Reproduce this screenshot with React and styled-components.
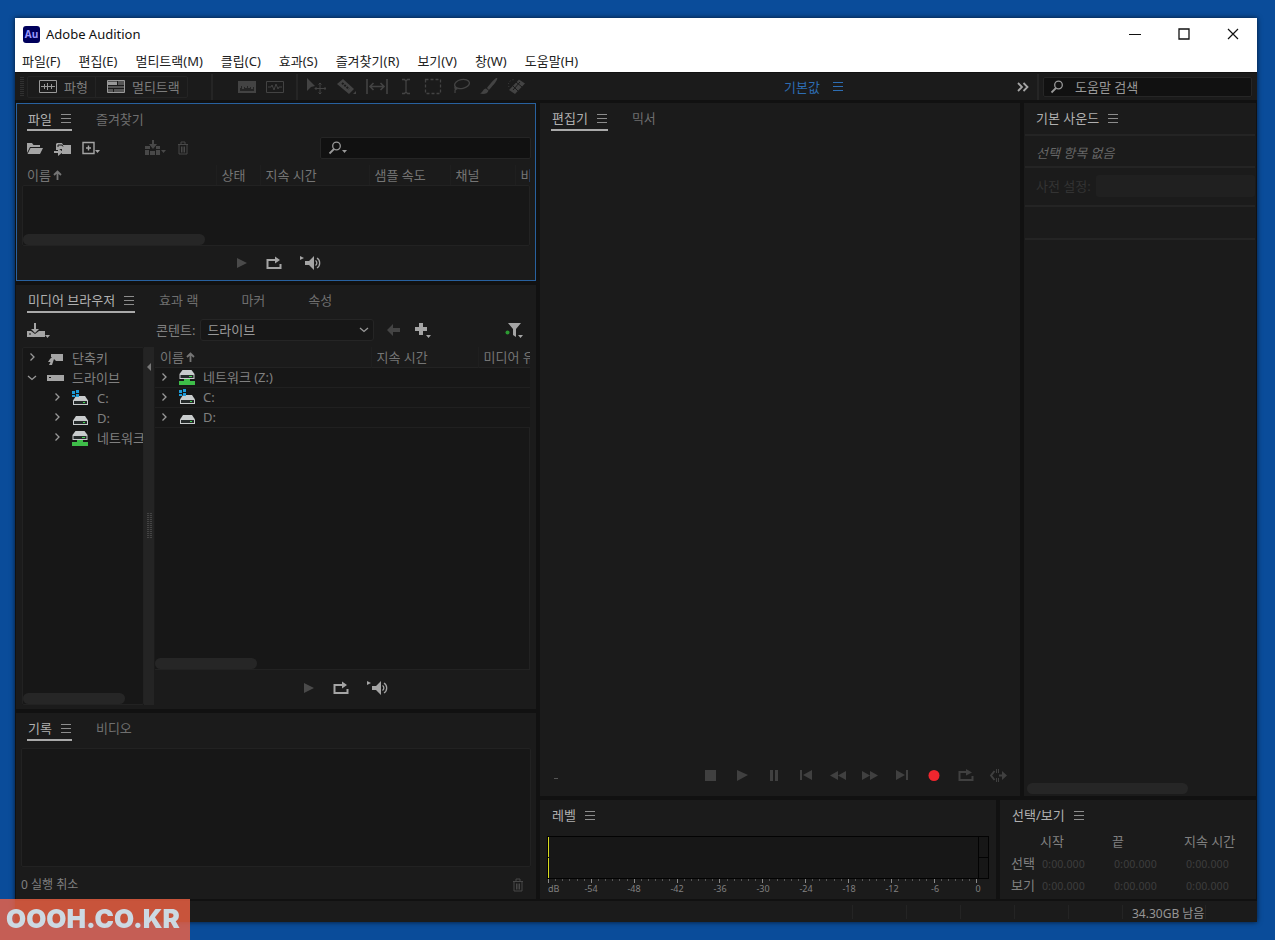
import React from 'react'
import styled, { createGlobalStyle, css } from 'styled-components'

const GlobalStyle = createGlobalStyle`
  * { box-sizing: border-box; }
  body {
    margin: 0;
    background: #0a4c9a;
    font-family: "Noto Sans", "Noto Sans CJK KR", sans-serif;
    font-size: 13px;
    line-height: 20px;
    color: #808080;
  }
  button, input, select {
    font: inherit;
    color: inherit;
    border: 0;
    padding: 0;
    margin: 0;
    background: none;
  }
  svg { display: block; flex: none; }
`

const Desktop = styled.div`
  min-height: 100vh;
  display: flex;
  padding: 18px 18px 18px 15px;
`

const Window = styled.div`
  flex: 1;
  min-width: 0;
  display: flex;
  flex-direction: column;
  background: #111;
  box-shadow: 0 0 5px rgba(0, 0, 0, 0.7);
`

const TitleBar = styled.header`
  display: flex;
  align-items: center;
  height: 32px;
  padding: 0 0 0 8px;
  background: #fff;
  color: #111;
`

const AppName = styled.h1`
  flex: 1;
  margin: 0 0 0 6px;
  font-size: 13px;
  font-weight: 400;
`

const Caption = styled.button`
  width: 49px;
  height: 30px;
  display: flex;
  align-items: center;
  justify-content: center;
  color: #111;
`

const MenuBar = styled.nav`
  display: flex;
  align-items: center;
  gap: 18px;
  height: 22px;
  padding: 0 7px;
  background: #fff;
`

const MenuItem = styled.button`
  color: #222;
  white-space: nowrap;
`

const Toolbar = styled.div`
  display: flex;
  align-items: center;
  height: 27px;
  margin-top: 1px;
  background: #1b1b1b;
`

const Grip = styled.div`
  width: 4px;
  height: 20px;
  margin: 0 3px 0 5px;
  background: repeating-linear-gradient(#303030 0 1px, transparent 1px 2px);
`

const ModeGroup = styled.div`
  display: flex;
  height: 22px;
  border: 1px solid #242424;
  border-radius: 2px;
`

const ModeButton = styled.button`
  display: flex;
  align-items: center;
  gap: 7px;
  padding: 0 7px 0 11px;
  color: #7c7c7c;
  & + & { border-left: 1px solid #242424; }
`

const Divider = styled.div`
  width: 2px;
  height: 26px;
  background: #252525;
`

const ToolGroup = styled.div`
  display: flex;
  align-items: center;
  gap: ${p => p.$gap}px;
  padding: ${p => p.$pad};
  color: #404040;
`

const IconButton = styled.button`
  display: flex;
  align-items: center;
  justify-content: center;
  color: ${p => p.$tone || '#a5a5a5'};
`

const Workspace = styled.div`
  margin-left: auto;
  display: flex;
  align-items: center;
  gap: 13px;
  color: #2d6db3;
`

const HelpSearch = styled.label`
  display: flex;
  align-items: center;
  gap: 11px;
  width: 209px;
  height: 20px;
  margin: 0 5px 0 4px;
  padding: 0 6px;
  border: 1px solid #262626;
  border-radius: 2px;
  background: #111;
  color: #999;
  input { width: 100%; min-width: 0; outline: 0; }
  input::placeholder { color: #999; opacity: 1; }
`

const Main = styled.main`
  flex: 1;
  display: grid;
  grid-template-columns: minmax(0, 520fr) minmax(0, 716fr);
  gap: 4px;
  padding: 3px 1px 2px;
`

const LeftColumn = styled.div`
  display: grid;
  grid-template-rows: 178px 1fr 186px;
  gap: 4px;
  min-width: 0;
`

const RightColumn = styled.div`
  display: flex;
  flex-direction: column;
  gap: 4px;
  min-width: 0;
`

const SplitRow = styled.div`
  display: flex;
  gap: 4px;
  flex: ${p => (p.$grow ? '1' : '0 0 99px')};
`

const Panel = styled.section`
  display: flex;
  flex-direction: column;
  flex: ${p => p.$flex || 1} 1 0;
  min-width: 0;
  background: #1b1b1b;
`

const FilePanel = styled(Panel)`
  border: 1px solid #28619f;
`

const Tabs = styled.div`
  display: flex;
  flex: none;
  gap: 23px;
  height: ${p => (p.$inset ? 27 : 28)}px;
  padding: 0 ${p => (p.$inset ? 10 : 11)}px;
  white-space: nowrap;
`

const Tab = styled.button`
  display: flex;
  align-items: center;
  gap: 9px;
  padding: 4px ${p => (p.$active || p.$single ? 1 : 19)}px 0 1px;
  border-bottom: 2px solid transparent;
  color: #6f6f6f;
  svg { color: #8c8c8c; }
  ${p => p.$active && css`
    color: #b0b0b0;
    border-color: #aaa;
  `}
  ${p => p.$single && css`
    color: #b0b0b0;
  `}
`

const FileTools = styled.div`
  display: flex;
  align-items: center;
  height: 34px;
  padding: 0 4px 0 9px;
  gap: 10px;
`

const Spacer = styled.div`
  flex: ${p => (p.$w ? `0 0 ${p.$w}px` : '1')};
`

const FileSearch = styled.label`
  display: flex;
  align-items: center;
  width: 211px;
  height: 22px;
  padding-left: 7px;
  border: 1px solid #252525;
  border-radius: 2px;
  background: #111;
  color: #999;
  input { flex: 1; min-width: 0; outline: 0; }
`

const HeadTable = styled.table`
  width: 100%;
  table-layout: fixed;
  border-collapse: collapse;
  th {
    height: 20px;
    padding: 0 0 0 5px;
    font-weight: 400;
    text-align: left;
    white-space: nowrap;
    overflow: hidden;
    color: #757575;
  }
  th + th { border-left: 1px solid #1f1f1f; }
  td {
    height: 20px;
    padding: 0;
    line-height: 19px;
    border-bottom: 1px solid #202020;
    background: #171717;
  }
  tbody tr:first-child td { border-top: 1px solid #232323; }
`

const SortLabel = styled.span`
  display: inline-flex;
  align-items: center;
  gap: 2px;
`

const ListBox = styled.div`
  flex: 1;
  display: flex;
  flex-direction: column;
  justify-content: flex-end;
  border: 1px solid #222;
  border-radius: 2px;
  background: #171717;
`

const FileList = styled.div`
  flex: 1;
  display: flex;
  flex-direction: column;
  margin: 0 5px;
`

const Scrollbar = styled.div`
  width: ${p => p.$size};
  height: 11px;
  border-radius: 6px;
  background: #262626;
`

const PreviewBar = styled.div`
  display: flex;
  align-items: center;
  justify-content: center;
  gap: 18px;
  height: ${p => p.$h}px;
  padding-left: 6px;
`

const MediaGrid = styled.div`
  flex: 1;
  display: grid;
  grid-template-columns: 122px 10px minmax(0, 1fr);
  grid-template-rows: 34px 1fr;
  padding: 0 6px 4px;
`

const MediaTools = styled.div`
  grid-column: 2 / 4;
  display: flex;
  align-items: center;
  padding: 0 7px 0 12px;
`

const SelectBox = styled.div`
  position: relative;
  display: flex;
  align-items: center;
  width: 174px;
  height: 22px;
  margin: 0 13px 0 5px;
  border: 1px solid #252525;
  border-radius: 3px;
  background: #171717;
  color: #999;
  select {
    width: 100%;
    padding-left: 6px;
    appearance: none;
    outline: 0;
  }
  svg {
    position: absolute;
    right: 4px;
    pointer-events: none;
  }
`

const TreeBox = styled(ListBox)`
  justify-content: space-between;
  overflow: hidden;
`

const Tree = styled.ul`
  list-style: none;
  margin: 0;
  padding: 0;
`

const TreeRow = styled.li`
  display: flex;
  align-items: center;
  height: 20px;
  padding-left: ${p => (p.$depth ? 29 : 4)}px;
  gap: 8px;
  white-space: nowrap;
  svg:first-child { margin-right: 2px; }
`

const Handle = styled.div`
  display: flex;
  flex-direction: column;
  align-items: center;
  justify-content: space-between;
  padding: 16px 0 166px;
  background: #242424;
`

const Dots = styled.div`
  width: 5px;
  height: 26px;
  border: solid #444;
  border-width: 0 2px;
  background: #2b2b2b;
  mask: repeating-linear-gradient(#000 0 1px, transparent 1px 2px);
`

const MediaList = styled.div`
  display: flex;
  flex-direction: column;
  padding-left: 1px;
`

const MediaBody = styled.div`
  flex: 1;
  display: flex;
  align-items: flex-end;
  background: #171717;
  border-right: 1px solid #222;
  border-bottom: 1px solid #222;
`

const RowLabel = styled.div`
  display: flex;
  align-items: center;
  gap: 7px;
  padding-left: 4px;
  svg:first-child { margin-right: 3px; }
`

const HistoryFoot = styled.div`
  display: flex;
  align-items: center;
  justify-content: space-between;
  height: 32px;
  padding: 4px 12px 0 5px;
  font-size: 12px;
`

const Stage = styled.div`
  flex: 1;
`

const Transport = styled.div`
  display: flex;
  align-items: center;
  height: 42px;
  padding: 0 6px 0 14px;
`

const TransportButton = styled(IconButton)`
  width: 32px;
  height: 20px;
  color: ${p => (p.$record ? '#f0262e' : '#404040')};
`

const SoundRow = styled.div`
  display: flex;
  align-items: center;
  height: ${p => p.$h}px;
  margin: 0 1px;
  padding: 0 0 2px 11px;
  gap: 5px;
  border-top: 2px solid #242424;
  white-space: nowrap;
  color: ${p => p.$tone};
`

const Muted = styled.em`
  padding-top: 6px;
  color: #666;
`

const PresetSelect = styled.select`
  flex: 1;
  min-width: 0;
  height: 22px;
  appearance: none;
  border-radius: 3px;
  background: #202020;
  opacity: 1;
`

const SoundScroll = styled.div`
  padding: 0 2px 2px 3px;
`

const Meter = styled.div`
  display: grid;
  grid-template-columns: 1fr 9px;
  gap: 1px;
  height: 43px;
  margin: 8px 7px 0;
  padding: 1px;
  background: #030303;
`

const MeterHalf = styled.div`
  display: grid;
  grid-template-rows: 1fr 1fr;
  gap: 1px;
  span { background: #171717; }
  ${p => p.$live && css`
    background: #171717;
    span { border-left: 1px solid #d9dc1f; }
  `}
`

const Ticks = styled.div`
  display: flex;
  justify-content: space-between;
  margin: 0 18px 0 8px;
`

const Tick = styled.i`
  width: 1px;
  height: ${p => (p.$major ? 4 : 2)}px;
  background: ${p => (p.$major ? '#888' : '#555')};
`

const Scale = styled.div`
  display: flex;
  justify-content: space-between;
  margin: 0 18px 0 8px;
  font-size: 9px;
  line-height: 12px;
  span {
    width: 0;
    display: flex;
    justify-content: center;
    white-space: nowrap;
  }
  span:first-child { justify-content: flex-start; }
`

const TimeTable = styled.table`
  table-layout: fixed;
  border-collapse: collapse;
  width: 244px;
  margin-left: 11px;
  th, td {
    height: 22px;
    padding: 0;
    text-align: left;
    font-weight: 400;
    line-height: 18px;
    white-space: nowrap;
  }
  td {
    padding-left: 2px;
    font-family: "Noto Sans CJK KR", sans-serif;
    font-size: 11px;
    color: #3d3d3d;
  }
  thead th { height: 20px; }
`

const StatusBar = styled.footer`
  display: flex;
  align-items: center;
  justify-content: flex-end;
  height: 21px;
  padding-right: 51px;
  background: #1b1b1b;
`

const StatusCell = styled.div`
  min-width: ${p => p.$w || 54}px;
  height: 14px;
  padding-left: 9px;
  border-left: 1px solid #242424;
  border-right: ${p => (p.$last ? '1px solid #242424' : 0)};
  font-size: 12px;
  line-height: 18px;
  color: #959595;
`

const Watermark = styled.div`
  position: fixed;
  left: 0;
  bottom: 0;
  width: 190px;
  height: 41px;
  padding-left: 6px;
  background: rgba(244, 99, 68, 0.8);
  color: #ccd9e2;
  font-family: Inter, sans-serif;
  font-size: 26px;
  font-weight: 900;
  line-height: 40px;
`

const Icon = ({ w = 16, h = 16, children }) => (
  <svg width={w} height={h} viewBox={`0 0 ${w} ${h}`} fill="currentColor" aria-hidden="true">
    {children}
  </svg>
)

const line = { fill: 'none', stroke: 'currentColor' }

const Burger = () => (
  <Icon w={10} h={9}><path d="M0 0h10v1H0zM0 4h10v1H0zM0 8h10v1H0z" /></Icon>
)

const Caret = () => (
  <Icon w={6} h={12}><path d="M0 8h5l-2.5 3z" /></Icon>
)

const Search = () => (
  <Icon w={14} h={14}>
    <circle cx="8.5" cy="5" r="3.8" {...line} strokeWidth="1.3" />
    <path d="M6 8L1.500 12.500" {...line} strokeWidth="1.8" />
  </Icon>
)

const Chevron = ({ open }) => (
  <Icon w={10} h={10}>
    <path d={open ? 'M1 3l4 3.5L9 3' : 'M3.5 0.5L7 4 3.5 7.5'} {...line} stroke="#999" strokeWidth="1.3" />
  </Icon>
)

const SortArrow = () => (
  <Icon w={9} h={11}><path d="M1 5l3.5-3.5L8 5M4.5 2v8" {...line} strokeWidth="1.8" /></Icon>
)

const Trash = () => (
  <Icon w={12} h={14}>
    <path d="M1 3.5h10M4 3V1h4v2M2 4v9h8V4M4.5 5.500v6M6 5.500v6M7.5 5.500v6" {...line} />
  </Icon>
)

const PlayIcon = () => <Icon w={12} h={12}><path d="M1 1l10 5-10 5z" /></Icon>

const LoopIcon = () => (
  <Icon w={16} h={14}>
    <path d="M5 4H1.5v8h13V8" {...line} strokeWidth="2" />
    <path d="M4 3h5V0.5L14 4 9 7.5V5H4z" />
  </Icon>
)

const SpeakerIcon = () => (
  <Icon w={22} h={16}>
    <path d="M0 1l4 2-4 2zM5 6h4l5-5v14l-5-5H5z" />
    <path d="M15.5 5.5a3 3 0 010 5M17 3a6 6 0 010 10" {...line} strokeWidth="1.3" />
  </Icon>
)

const Drive = ({ kind }) => (
  <Icon w={17} h={17}>
    {kind === 'net' ? (
      <>
        <path d="M3.5 1h9l3 4v5H0.500V5z" fill="#c9cccd" />
        <path d="M1.5 6h13v3h-13z" fill="#262b2b" />
        <path d="M10 7h3v1h-3z" fill="#40d850" />
        <path d="M5 10h6v2h5v4H0v-4h5z" fill="#3ebd49" />
      </>
    ) : (
      <>
        <path d="M4 6h9l3 4.5V15H1v-4.5z" fill="#c9cccd" />
        <path d="M2 11h13v3H2z" fill="#262b2b" />
        <path d="M11 12h2v1h-2z" fill="#40d850" />
        {kind === 'sys' && <path d="M0 1h3v3H0zM4 0h3v3H4zM0 5h3v2H0zM4 4h3v3H4z" fill="#1d9bd8" />}
      </>
    )}
  </Icon>
)

const toolIcons = [
  ['이동', 20, <><path d="M1 0l8 8-4 1-4 4z" /><path d="M14 5v11M9 10.5h11M12.5 6.5L14 5l1.5 1.5M12.5 14.5L14 16l1.5-1.5M10.5 9L9 10.5l1.5 1.5M18.5 9l1.5 1.5-1.5 1.5" {...line} /></>],
  ['자르기', 20, <><path d="M1 6l6-5 11 10-5 5z" /><path d="M6 5l7 6" {...line} stroke="#1b1b1b" strokeWidth="2" strokeDasharray="2 1" /><path d="M20 13v3h-3z" /></>],
  ['밀어넣기', 22, <path d="M1 1v15M21 1v15M4 8.5h14M7.5 5L4 8.5 7.5 12M14.5 5L18 8.5 14.5 12" {...line} strokeWidth="1.6" />],
  ['시간 선택', 16, <path d="M4 1.5h2.5L8 3l1.5-1.5H12M8 3v11M4 15.5h2.5L8 14l1.5 1.5H12" {...line} strokeWidth="1.3" />],
  ['선택 윤곽', 18, <path d="M1.5 1.5h15v14h-15z" {...line} strokeWidth="1.3" strokeDasharray="3 2" />],
  ['올가미', 18, <><ellipse cx="10" cy="6" rx="7.5" ry="4.5" {...line} strokeWidth="1.3" transform="rotate(-12 10 6)" /><path d="M4 8c-3 2 1 4 1 2.5S2.500 10 3 15" {...line} strokeWidth="1.3" /></>],
  ['브러시', 18, <><path d="M17 0c2 1-6 10-8 12l-2-2C9 7 16-1 17 0z" /><path d="M6 10.5l2.5 2C8 16 3 16.5 0 15.5c3-1 3-5 6-5z" /></>],
  ['복구', 18, <><path d="M1 12L11 1.500l6 4L7 16z" /><path d="M8 4l6 5M5 8l5 5M12 4l-7 8" {...line} stroke="#1b1b1b" /><path d="M1 9a5 5 0 016-7" {...line} strokeDasharray="1 2" /></>],
]

const menus = ['파일(F)', '편집(E)', '멀티트랙(M)', '클립(C)', '효과(S)', '즐겨찾기(R)', '보기(V)', '창(W)', '도움말(H)']

const transport = [
  ['정지', <path d="M3 3h11v11H3z" />],
  ['재생', <path d="M3 3l11 5-11 6z" />],
  ['일시 정지', <path d="M4 3h3v11H4zM9 3h3v11H9z" />],
  ['처음으로', <path d="M2 3h2v10H2zM14 3v10L5 8z" />],
  ['되감기', <path d="M8 4v9L0 8.500zM16 4v9L8 8.500z" />],
  ['빨리 감기', <path d="M0 4l8 4.5L0 13zM8 4l8 4.5L8 13z" />],
  ['끝으로', <path d="M2 3l9 5-9 5zM12 3h2v10h-2z" />],
  ['녹음', <circle cx="8" cy="8.5" r="5.5" />],
  ['반복', <><path d="M5 5H1.5v8h13V9" {...line} strokeWidth="2" /><path d="M4 4h4V2l6 3.5L8 8.5V6H4z" /></>],
  ['건너뛰기', <><path d="M4.5 4L1 8.5 4.5 13" {...line} strokeWidth="2" /><path d="M6.5 2v4M6.5 11v4M8.5 2v4M8.5 11v4" {...line} /><path d="M9 7.500h3V4l5 4.5-5 4.5V9.500H9z" /></>],
]

const scale = ['dB', '-54', '-48', '-42', '-36', '-30', '-24', '-18', '-12', '-6', '0']

const tree = [
  { name: 'C:', kind: 'sys' },
  { name: 'D:', kind: 'disk' },
  { name: '네트워크', kind: 'net' },
]

const drives = [
  { name: '네트워크 (Z:)', kind: 'net' },
  { name: 'C:', kind: 'sys' },
  { name: 'D:', kind: 'disk' },
]

const PanelTabs = ({ names, single, inset }) => (
  <Tabs $inset={inset}>
    {names.map((name, i) => (
      <Tab key={name} $active={!single && i === 0} $single={single}>
        {name}
        {i === 0 && <Burger />}
      </Tab>
    ))}
  </Tabs>
)

const Preview = ({ h }) => (
  <PreviewBar $h={h}>
    <IconButton $tone="#4a4a4a" aria-label="재생"><PlayIcon /></IconButton>
    <IconButton aria-label="반복"><LoopIcon /></IconButton>
    <IconButton aria-label="자동 재생"><SpeakerIcon /></IconButton>
  </PreviewBar>
)

const Files = () => (
  <FilePanel>
    <PanelTabs names={['파일', '즐겨찾기']} inset />
    <FileTools>
      <IconButton aria-label="열기">
        <Icon w={17} h={14}><path d="M1 12V2h5l1.5 2H14v2H4L1 12zM4.5 7H17l-3 6H1.5z" /></Icon>
      </IconButton>
      <IconButton aria-label="가져오기">
        <Icon w={19} h={15}>
          <path d="M3 9V3l1-1h5l1 2h8v9H9V8H5v1z" />
          <path d="M5 6V4h4l1 1.500" {...line} stroke="#1b1b1b" />
          <path d="M1 10h4V7l5 4-5 4v-3H1z" />
        </Icon>
      </IconButton>
      <IconButton aria-label="새 파일">
        <Icon w={13} h={14}><path d="M1 1.5h11v11H1zM6.5 4.5v5M4 7h5" {...line} strokeWidth="1.4" /></Icon>
        <Caret />
      </IconButton>
      <Spacer $w={24} />
      <IconButton $tone="#484848" aria-label="멀티트랙에 삽입">
        <Icon w={16} h={16}><path d="M0 6h5v3H0zM11 6h4v3h-4zM0 10h4v5H0zM5 11h5v4H5zM11 10h4v5h-4zM7 0h2v4h3L8 9 4 4h3z" /></Icon>
        <Caret />
      </IconButton>
      <IconButton $tone="#484848" aria-label="삭제"><Trash /></IconButton>
      <Spacer />
      <FileSearch>
        <Search />
        <Caret />
        <input type="text" aria-label="파일 검색" />
      </FileSearch>
    </FileTools>
    <FileList>
      <HeadTable>
        <colgroup>
          <col style={{ width: 194 }} /><col style={{ width: 44 }} /><col style={{ width: 109 }} />
          <col style={{ width: 81 }} /><col style={{ width: 65 }} /><col />
        </colgroup>
        <thead>
          <tr>
            <th><SortLabel>이름<SortArrow /></SortLabel></th>
            <th>상태</th>
            <th>지속 시간</th>
            <th>샘플 속도</th>
            <th>채널</th>
            <th>비</th>
          </tr>
        </thead>
      </HeadTable>
      <ListBox><Scrollbar $size="36%" /></ListBox>
    </FileList>
    <Preview h={34} />
  </FilePanel>
)

const Media = () => (
  <Panel>
    <PanelTabs names={['미디어 브라우저', '효과 랙', '마커', '속성']} />
    <MediaGrid>
      <ToolGroup $gap={0} $pad="0 0 0 5px">
        <IconButton aria-label="가져오기">
          <Icon w={18} h={16}><path d="M0 9h4l4 3 4-3h6v6H0zM7 1h2v6h3l-4 4-4-4h3z" /><path d="M2 11.5h2v1H2z" fill="#1b1b1b" /></Icon>
          <Icon w={6} h={16}><path d="M0 13h5l-2.5 3z" /></Icon>
        </IconButton>
      </ToolGroup>
      <MediaTools>
        <label htmlFor="content">콘텐트:</label>
        <SelectBox>
          <select id="content" defaultValue="드라이브"><option>드라이브</option></select>
          <Chevron open />
        </SelectBox>
        <IconButton $tone="#444" aria-label="뒤로">
          <Icon w={13} h={12}><path d="M0 6l6-6v4h7v4H6v4z" /></Icon>
        </IconButton>
        <Spacer $w={15} />
        <IconButton aria-label="추가">
          <Icon w={17} h={16}><path d="M4 1h4v4h4v4H8v4H4V9H0V5h4zM11 13h5l-2.5 3z" /></Icon>
        </IconButton>
        <Spacer />
        <IconButton aria-label="필터">
          <Icon w={18} h={16}>
            <circle cx="2.5" cy="10.5" r="2" fill="#2c9a32" />
            <path d="M3 1h13l-5 6v8l-3-2V7zM13 13h5l-2.5 3z" />
          </Icon>
        </IconButton>
      </MediaTools>
      <TreeBox>
        <Tree>
          <TreeRow>
            <Chevron />
            <Icon w={17} h={13}><path d="M4 2h12v7H9L7 7l-2 6H2l1.500-3H1l2-3 2-2H4z" fill="#a5a5a5" /></Icon>
            단축키
          </TreeRow>
          <TreeRow>
            <Chevron open />
            <Icon w={17} h={8}><path d="M0 1h17v6H0z" fill="#a5a5a5" /><path d="M2 3h2v1H2z" fill="#171717" /></Icon>
            드라이브
          </TreeRow>
          {tree.map(item => (
            <TreeRow key={item.name} $depth={1}>
              <Chevron />
              <Drive kind={item.kind} />
              {item.name}
            </TreeRow>
          ))}
        </Tree>
        <Scrollbar $size="102px" />
      </TreeBox>
      <Handle>
        <Icon w={4} h={8}><path d="M4 0v8L0 4z" fill="#777" /></Icon>
        <Dots />
      </Handle>
      <MediaList>
        <HeadTable>
          <colgroup><col style={{ width: 216 }} /><col style={{ width: 107 }} /><col /></colgroup>
          <thead>
            <tr>
              <th><SortLabel>이름<SortArrow /></SortLabel></th>
              <th>지속 시간</th>
              <th>미디어 유</th>
            </tr>
          </thead>
          <tbody>
            {drives.map(item => (
              <tr key={item.name}>
                <td colSpan={3}>
                  <RowLabel><Chevron /><Drive kind={item.kind} />{item.name}</RowLabel>
                </td>
              </tr>
            ))}
          </tbody>
        </HeadTable>
        <MediaBody><Scrollbar $size="102px" /></MediaBody>
        <Preview h={35} />
      </MediaList>
    </MediaGrid>
  </Panel>
)

const History = () => (
  <Panel>
    <PanelTabs names={['기록', '비디오']} />
    <Spacer $w={7} />
    <FileList><ListBox /></FileList>
    <HistoryFoot>
      0 실행 취소
      <IconButton $tone="#484848" aria-label="삭제"><Trash /></IconButton>
    </HistoryFoot>
  </Panel>
)

const Editor = () => (
  <Panel $flex={480}>
    <PanelTabs names={['편집기', '믹서']} />
    <Stage />
    <Transport>
      <Icon w={5} h={8}><path d="M0 7h4v1H0z" fill="#555" /></Icon>
      <Spacer />
      {transport.map(([name, shape]) => (
        <TransportButton key={name} $record={name === '녹음'} aria-label={name}>
          <Icon w={17} h={17}>{shape}</Icon>
        </TransportButton>
      ))}
    </Transport>
  </Panel>
)

const Sound = () => (
  <Panel $flex={232}>
    <PanelTabs names={['기본 사운드']} single />
    <Spacer $w={3} />
    <SoundRow $h={32}><Muted>선택 항목 없음</Muted></SoundRow>
    <SoundRow $h={39} $tone="#333">
      <label htmlFor="preset">사전 설정:</label>
      <PresetSelect id="preset" disabled />
    </SoundRow>
    <SoundRow $h={33} />
    <SoundRow $h={2} />
    <Stage />
    <SoundScroll><Scrollbar $size="161px" /></SoundScroll>
  </Panel>
)

const Levels = () => (
  <Panel $flex={456}>
    <PanelTabs names={['레벨']} single />
    <Meter>
      <MeterHalf $live><span /><span /></MeterHalf>
      <MeterHalf><span /><span /></MeterHalf>
    </Meter>
    <Ticks>
      {Array.from({ length: 61 }, (_, i) => <Tick key={i} $major={i % 6 === 0} />)}
    </Ticks>
    <Scale>
      {scale.map(value => <span key={value}>{value}</span>)}
    </Scale>
  </Panel>
)

const Selection = () => (
  <Panel $flex={256}>
    <PanelTabs names={['선택/보기']} single />
    <Spacer $w={2} />
    <TimeTable>
      <colgroup><col style={{ width: 29 }} /><col style={{ width: 72 }} /><col style={{ width: 72 }} /><col /></colgroup>
      <thead>
        <tr><td /><th scope="col">시작</th><th scope="col">끝</th><th scope="col">지속 시간</th></tr>
      </thead>
      <tbody>
        {['선택', '보기'].map(name => (
          <tr key={name}>
            <th scope="row">{name}</th>
            <td>0:00.000</td>
            <td>0:00.000</td>
            <td>0:00.000</td>
          </tr>
        ))}
      </tbody>
    </TimeTable>
  </Panel>
)

const App = () => (
  <>
    <GlobalStyle />
    <Desktop>
      <Window>
        <TitleBar>
          <svg width="17" height="17" viewBox="0 0 17 17" aria-hidden="true">
            <rect width="17" height="17" rx="3" fill="#00005b" />
            <text x="8.5" y="12" textAnchor="middle" fontFamily="Open Sans" fontSize="10" fontWeight="700" fill="#9999ff">Au</text>
          </svg>
          <AppName>Adobe Audition</AppName>
          <Caption aria-label="최소화"><Icon w={12} h={12}><path d="M0 6h12v1H0z" /></Icon></Caption>
          <Caption aria-label="최대화"><Icon w={12} h={12}><path d="M1 1h10v10H1z" {...line} strokeWidth="1.3" /></Icon></Caption>
          <Caption aria-label="닫기"><Icon w={12} h={12}><path d="M1 1l10 10M11 1L1 11" {...line} strokeWidth="1.2" /></Icon></Caption>
        </TitleBar>
        <MenuBar>
          {menus.map(name => <MenuItem key={name}>{name}</MenuItem>)}
        </MenuBar>
        <Toolbar>
          <Grip />
          <ModeGroup>
            <ModeButton>
              <Icon w={18} h={13}>
                <path d="M0.5 0.5h17v12H0.5z" {...line} stroke="#999" />
                <path d="M2 6h14v1H2zM5 4h1v5H5zM8 3h1v7H8zM12 4h1v5h-1z" fill="#999" />
              </Icon>
              파형
            </ModeButton>
            <ModeButton>
              <Icon w={18} h={13}>
                <path d="M0.5 0.5h17v12H0.5z" fill="#555" stroke="#999" />
                <path d="M1 5.5h16M1 8.5h16M10.5 1v4M6.5 9v3" {...line} stroke="#1b1b1b" />
                <path d="M1 2h9v3H1z" fill="#999" />
              </Icon>
              멀티트랙
            </ModeButton>
          </ModeGroup>
          <Spacer $w={23} />
          <Divider />
          <ToolGroup $gap={10} $pad="0 12px 0 25px">
            <IconButton $tone="#434343" aria-label="주파수 스펙트럼">
              <Icon w={18} h={12}><path d="M0 0h18v12H0z" /><path d="M2 10V7h1V5h1v3h2V6h1v1h2V5h1v2h2V6h1v2h2V6h1v4z" fill="#242424" /></Icon>
            </IconButton>
            <IconButton $tone="#434343" aria-label="피치 스펙트럼">
              <Icon w={18} h={12}><path d="M0.5 0.5h17v11H0.5zM2 6h3l1-2 2 5 2-6 2 5 1-2h3" {...line} /></Icon>
            </IconButton>
          </ToolGroup>
          <Divider />
          <ToolGroup $gap={10} $pad="0 0 0 8px">
            {toolIcons.map(([name, w, shape]) => (
              <IconButton key={name} $tone="#434343" aria-label={name}>
                <Icon w={w} h={17}>{shape}</Icon>
              </IconButton>
            ))}
          </ToolGroup>
          <Workspace>기본값 <Burger /></Workspace>
          <Spacer $w={174} />
          <IconButton aria-label="더 보기">
            <Icon w={12} h={10}><path d="M1 1l4 4-4 4M6.500 1l4 4-4 4" {...line} strokeWidth="1.8" /></Icon>
          </IconButton>
          <Spacer $w={8} />
          <Divider />
          <HelpSearch>
            <Search />
            <input type="text" placeholder="도움말 검색" aria-label="도움말 검색" />
          </HelpSearch>
        </Toolbar>
        <Main>
          <LeftColumn>
            <Files />
            <Media />
            <History />
          </LeftColumn>
          <RightColumn>
            <SplitRow $grow>
              <Editor />
              <Sound />
            </SplitRow>
            <SplitRow>
              <Levels />
              <Selection />
            </SplitRow>
          </RightColumn>
        </Main>
        <StatusBar>
          <StatusCell /><StatusCell /><StatusCell /><StatusCell /><StatusCell />
          <StatusCell $w={84} $last>34.30GB 남음</StatusCell>
        </StatusBar>
      </Window>
    </Desktop>
    <Watermark>OOOH.CO.KR</Watermark>
  </>
)

export default App
